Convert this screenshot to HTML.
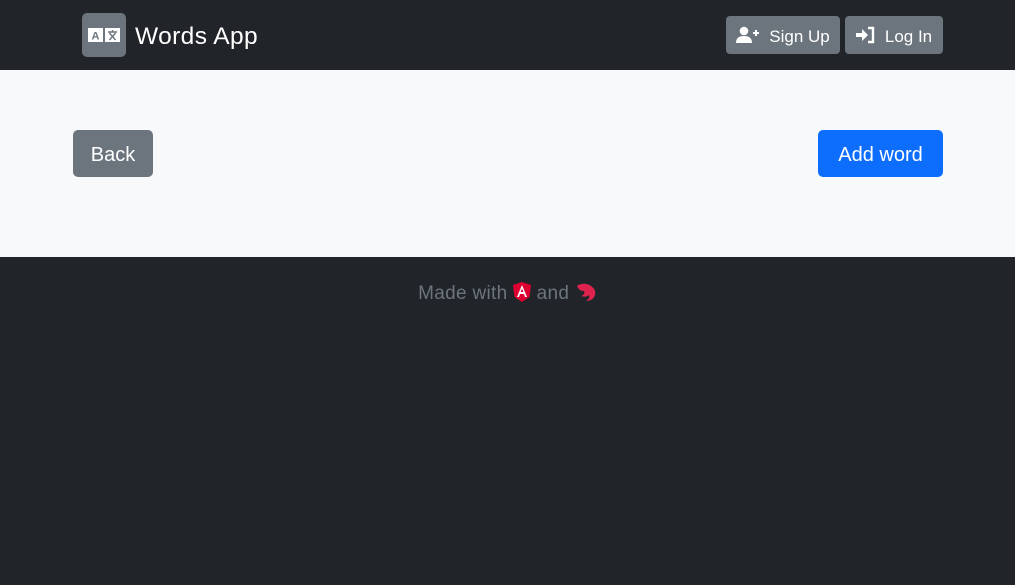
<!DOCTYPE html>
<html><head><meta charset="utf-8"><style>
*{box-sizing:border-box;margin:0;padding:0}
body{width:1015px;height:585px;background:#212529;font-family:"Liberation Sans",sans-serif;overflow:hidden;position:relative}
.nav{position:absolute;left:0;top:0;width:1015px;height:70px;background:#212529}
.logo{position:absolute;left:82px;top:13px;width:44px;height:44px;background:#6c757d;border-radius:5px}
.brand{position:absolute;left:135px;top:22px;color:#fff;font-size:24.5px;line-height:30px;letter-spacing:0.4px}
.btn{position:absolute;color:#fff;border-radius:4px;display:flex;align-items:center;justify-content:center;padding-top:3px}
.sec{background:#6c757d}
.main{position:absolute;left:0;top:70px;width:1015px;height:187px;background:#f8f9fa}
.foot{position:absolute;left:0;top:282px;width:1015px;text-align:center;color:#6c757d;font-size:19px;line-height:24px;letter-spacing:0.3px}
</style></head><body>
<div class="nav">
 <div class="logo">
  <svg width="44" height="44" viewBox="0 0 44 44">
   <rect x="6" y="15" width="15" height="14" fill="#fff"/>
   <text x="13.5" y="26.5" font-size="11" font-weight="bold" text-anchor="middle" fill="#6c757d" font-family="Liberation Sans">A</text>
   <rect x="23" y="15" width="15" height="14" fill="#fff"/>
   <path d="M26 19h9M30.5 17v2M27.5 20l6 7M33.5 20l-6 7" stroke="#6c757d" stroke-width="1.4" fill="none"/>
  </svg>
 </div>
 <div class="brand">Words App</div>
 <div class="btn sec" style="left:726px;top:16px;width:114px;height:38px;font-size:17px">
  <svg width="24" height="18" viewBox="0 0 24 18" style="margin-right:9px;margin-top:-3px"><circle cx="8" cy="5" r="4.3" fill="#fff"/><path d="M0 17c0-5 3-7 8-7s8 2 8 7z" fill="#fff"/><path d="M17 7h6M20 4v6" stroke="#fff" stroke-width="2"/></svg>Sign Up</div>
 <div class="btn sec" style="left:845px;top:16px;width:98px;height:38px;font-size:17px">
  <svg width="20" height="18" viewBox="0 0 20 18" style="margin-right:9px;margin-top:-3px"><path d="M0 7h6V3l6 6-6 6v-4H0z" fill="#fff"/><path d="M12 2h5v14h-5" fill="none" stroke="#fff" stroke-width="2.4"/></svg>Log In</div>
</div>
<div class="main">
 <div class="btn sec" style="left:73px;top:60px;width:80px;height:47px;font-size:20px;border-radius:5px">Back</div>
 <div class="btn" style="left:818px;top:60px;width:125px;height:47px;font-size:20px;background:#0d6efd;border-radius:5px">Add word</div>
</div>
<div class="foot">Made with <svg width="18" height="20" viewBox="0 0 18 20" style="vertical-align:-3px"><path d="M9 0L0 3l1.5 12L9 20l7.5-5L18 3z" fill="#dd0031"/><path d="M9 3L4 15h2l1-3h4l1 3h2zM7.7 10L9 6.5 10.3 10z" fill="#fff"/></svg> and <svg width="22" height="20" viewBox="0 0 22 20" style="vertical-align:-3px"><path d="M2 4c4-3 10-3 14 0 3 2 5 5 4 9-1 4-5 6-9 6 3-2 4-4 3-6-2 2-5 2-8 1 3-1 4-3 3-5-3 0-5-1-7-5z" fill="#e0234e"/></svg></div>
</body></html>
